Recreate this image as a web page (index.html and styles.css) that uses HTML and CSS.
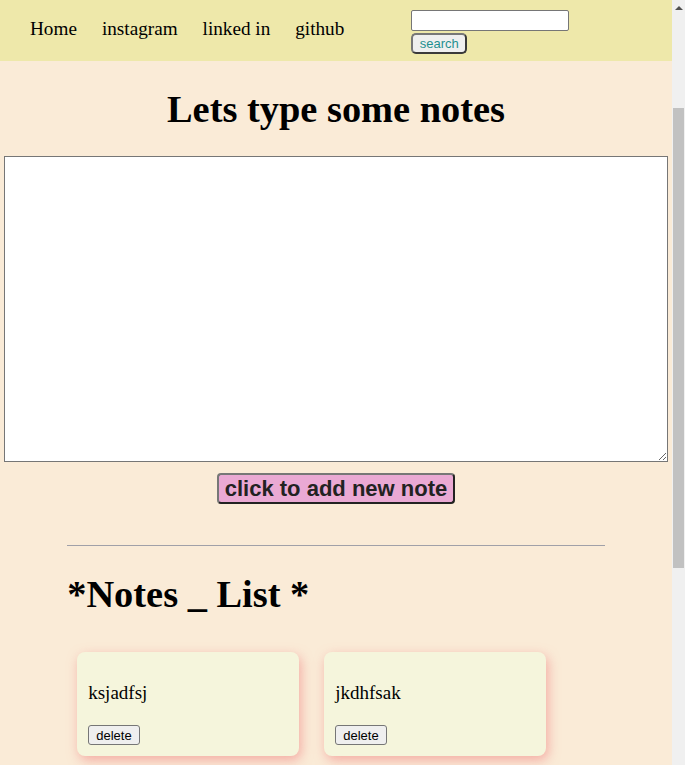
FILE: index.html
```html
<!DOCTYPE html>
<html>
<head>
<meta charset="utf-8">
<title>Notes</title>
<link rel="stylesheet" href="styles.css">
</head>
<body>
<nav class="navbar">
  <ul class="nav-links">
    <li><a href="#">Home</a></li>
    <li><a href="#">instagram</a></li>
    <li><a href="#">linked in</a></li>
    <li><a href="#">github</a></li>
  </ul>
  <form class="search-form">
    <input type="text" class="search-input">
    <button type="button" class="search-btn">search</button>
  </form>
</nav>
<main class="main">
  <h1 class="title">Lets type some notes</h1>
  <textarea class="note-input"></textarea>
  <div class="add-row"><button type="button" class="add-btn">click to add new note</button></div>
  <section class="list">
    <hr class="divider">
    <h1 class="list-title">*Notes _ List *</h1>
    <div class="cards">
      <div class="card">
        <p class="card-text">ksjadfsj</p>
        <button type="button" class="del-btn">delete</button>
      </div>
      <div class="card">
        <p class="card-text">jkdhfsak</p>
        <button type="button" class="del-btn">delete</button>
      </div>
    </div>
  </section>
</main>
<div class="scrollbar" aria-hidden="true">
  <span class="scroll-arrow"></span>
  <span class="scroll-thumb"></span>
</div>
</body>
</html>
```
FILE: styles.css
```css
html { background: #faebd7; }
body {
  margin: 0 13px 0 0;
  background: #faebd7;
  font-family: "Liberation Serif", "Times New Roman", serif;
  min-height: 1222px;
}
.navbar {
  display: flex;
  align-items: flex-start;
  background: #eee8aa;
  height: 61px;
  box-sizing: border-box;
  padding: 10px 0 0 30px;
}
.nav-links {
  display: flex;
  gap: 25px;
  list-style: none;
  margin: 8px 0 0;
  padding: 0;
}
.nav-links a {
  color: #000;
  text-decoration: none;
  font-size: 19.2px;
}
.search-form {
  display: flex;
  flex-direction: column;
  align-items: flex-start;
  margin-left: 67px;
}
.search-input {
  box-sizing: border-box;
  width: 158px;
  height: 21px;
  margin: 0 0 2px;
  border: 1px solid #767676;
  border-radius: 2px;
  background: #fff;
}
.search-btn {
  box-sizing: border-box;
  width: 56px;
  height: 21px;
  padding: 0;
  font-family: "Liberation Sans", Arial, sans-serif;
  font-size: 13px;
  color: #1f8f8f;
  background: #efefef;
  border: 2px solid #3a3a3a;
  border-top-color: #777;
  border-left-color: #777;
  border-radius: 5px;
}
.title {
  text-align: center;
  font-size: 38.4px;
  margin: 26px 0 25px;
}
.note-input {
  display: block;
  box-sizing: border-box;
  width: 664px;
  height: 306px;
  margin: 0 4px;
  border: 1px solid #767676;
  background: #fff;
  resize: both;
}
.add-row {
  display: flex;
  justify-content: center;
  margin-top: 11px;
}
.add-btn {
  box-sizing: border-box;
  height: 31px;
  padding: 0 6px;
  font-family: "Liberation Sans", Arial, sans-serif;
  font-weight: bold;
  font-size: 22px;
  color: #222;
  background: #eaa9d4;
  border: 2px solid #222;
  border-top-color: #777;
  border-left-color: #777;
  border-radius: 4px;
}
.list {
  width: 80%;
  margin: 0 auto;
}
.divider {
  margin: 41px 0 0;
  border: 0;
  border-top: 1px solid #a0a0a8;
}
.list-title {
  font-size: 38.4px;
  margin: 26px 0 0;
}
.cards {
  display: flex;
  gap: 25px;
  padding: 36px 10px 0;
}
.card {
  box-sizing: border-box;
  width: 222px;
  height: 104px;
  background: #f5f5dc;
  border-radius: 8px;
  padding: 0 11px;
  box-shadow: 2px 4px 12px rgba(240, 128, 128, 0.6);
}
.card-text {
  font-size: 19px;
  margin: 30px 0 21px;
}
.del-btn {
  box-sizing: border-box;
  height: 20px;
  font-family: "Liberation Sans", Arial, sans-serif;
  font-size: 13px;
  padding: 0 7px;
  background: #efefef;
  border: 1px solid #767676;
  border-radius: 3px;
  color: #000;
}
.scrollbar {
  position: fixed;
  top: 0;
  right: 0;
  width: 13px;
  height: 100%;
  background: #f0f0f0;
}
.scroll-arrow {
  position: absolute;
  top: 6px;
  left: 3px;
  width: 0;
  height: 0;
  border-left: 4px solid transparent;
  border-right: 4px solid transparent;
  border-bottom: 4px solid #505050;
}
.scroll-thumb {
  position: absolute;
  top: 108px;
  left: 1px;
  width: 11px;
  height: 460px;
  background: #c1c1c1;
}
```
